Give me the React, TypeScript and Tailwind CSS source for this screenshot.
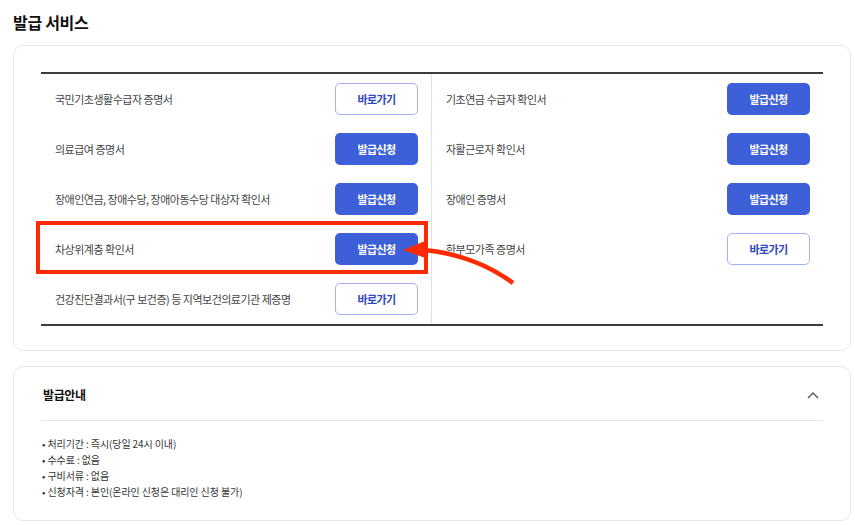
import React from "react";

const FONT = '"Noto Sans CJK KR", "Noto Sans", "Liberation Sans", sans-serif';

type Item = { label: string; kind: "apply" | "go" };

const left: Item[] = [
  { label: "국민기초생활수급자 증명서", kind: "go" },
  { label: "의료급여 증명서", kind: "apply" },
  { label: "장애인연금, 장애수당, 장애아동수당 대상자 확인서", kind: "apply" },
  { label: "차상위계층 확인서", kind: "apply" },
  { label: "건강진단결과서(구 보건증) 등 지역보건의료기관 제증명", kind: "go" },
];

const right: Item[] = [
  { label: "기초연금 수급자 확인서", kind: "apply" },
  { label: "자활근로자 확인서", kind: "apply" },
  { label: "장애인 증명서", kind: "apply" },
  { label: "한부모가족 증명서", kind: "go" },
];

function Btn({ kind }: { kind: "apply" | "go" }) {
  if (kind === "apply") {
    return (
      <button className="flex h-[32px] w-[83px] items-center justify-center rounded-[5px] bg-[#3d5fd8] text-[11px] font-bold tracking-[-0.6px] text-white">
        발급신청
      </button>
    );
  }
  return (
    <button className="flex h-[32px] w-[83px] items-center justify-center rounded-[5px] border border-[#a3b3ee] bg-white text-[11px] font-bold tracking-[-0.6px] text-[#2d48bd]">
      바로가기
    </button>
  );
}

function Row({ item, highlight }: { item: Item; highlight?: boolean }) {
  return (
    <div className="relative flex h-[50px] items-center justify-between pl-[14px] pr-[13px]">
      <span className="text-[11px] tracking-[-0.5px] text-[#444]">{item.label}</span>
      <Btn kind={item.kind} />
      {highlight && (
        <div className="pointer-events-none absolute left-[-5px] top-[-3px] h-[53px] w-[392px] border-[4px] border-[#ff2a00]" />
      )}
    </div>
  );
}

export default function App() {
  return (
    <div className="relative min-h-[525px] w-[855px] bg-white pl-[13px] pt-[9px]" style={{ fontFamily: FONT }}>
      <h1 className="text-[16px] font-bold leading-[26px] tracking-[-0.3px] text-[#111]">발급 서비스</h1>

      <div className="mt-[10px] w-[838px] rounded-[10px] border border-[#e8e8e8] px-[27px] pb-[24px] pt-[26px]">
        <div className="grid grid-cols-2 border-y-2 border-[#3c3c3c]">
          <div className="border-r border-[#e2e2e2]">
            {left.map((it, i) => (
              <Row key={i} item={it} highlight={i === 3} />
            ))}
          </div>
          <div>
            {right.map((it, i) => (
              <Row key={i} item={it} />
            ))}
          </div>
        </div>
      </div>

      <div className="mt-[15px] h-[155px] w-[838px] rounded-[10px] border border-[#e8e8e8] px-[27px]">
        <div className="flex items-center justify-between border-b border-[#e4e4e4] pb-[16px] pl-[2px] pr-[2px] pt-[19px]">
          <span className="text-[12px] font-bold leading-[18px] tracking-[-0.4px] text-[#111]">발급안내</span>
          <svg width="12" height="8" viewBox="0 0 12 8" className="mr-[2px]">
            <polyline points="1,7 6,2 11,7" fill="none" stroke="#555" strokeWidth="1.4" />
          </svg>
        </div>
        <ul className="pl-[1px] pt-[15px] text-[10px] leading-[16px] tracking-[-0.1px] text-[#333]">
          <li>• 처리기간 : 즉시(당일 24시 이내)</li>
          <li>• 수수료 : 없음</li>
          <li>• 구비서류 : 없음</li>
          <li>• 신청자격 : 본인(온라인 신청은 대리인 신청 불가)</li>
        </ul>
      </div>

      <svg className="pointer-events-none absolute left-0 top-0" width="855" height="525" viewBox="0 0 855 525">
        <path d="M 513 283 Q 475 255 424 250" fill="none" stroke="#ff2a00" strokeWidth="4.5" />
        <polygon points="403,250 425,241 428,259" fill="#ff2a00" />
      </svg>
    </div>
  );
}
